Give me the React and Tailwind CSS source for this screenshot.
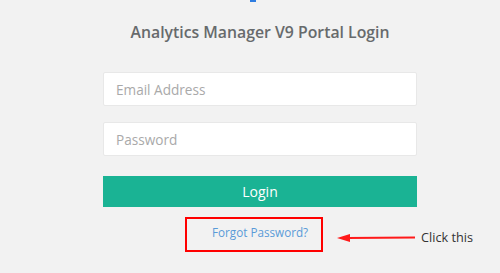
export default function App() {
  return (
    <div className="w-[500px] h-[273px] overflow-hidden bg-[#f2f2f2] relative" style={{ fontFamily: '"Open Sans", "Liberation Sans", sans-serif' }}>
      <div className="ml-[250px] w-[6px] h-[2px] bg-[#2f7de1]" />
      <div className="ml-[103px] w-[314px] flex flex-col">
        <h1 className="mt-[19px] text-center text-[15.8px] leading-[22px] font-semibold text-[#676a6c]">
          Analytics Manager V9 Portal Login
        </h1>
        <input
          className="mt-[29px] h-[34px] w-full bg-white border border-[#e8e8e8] rounded-[2px] px-[12px] text-[13.6px] text-[#555] placeholder:text-[#a9a9a9] outline-none"
          placeholder="Email Address"
        />
        <input
          className="mt-[16px] h-[34px] w-full bg-white border border-[#e8e8e8] rounded-[2px] px-[12px] text-[13.6px] text-[#555] placeholder:text-[#a9a9a9] outline-none"
          placeholder="Password"
          type="password"
        />
        <button className="mt-[20px] h-[31px] w-full bg-[#1ab394] text-white text-[14px] leading-[31px]">
          Login
        </button>
        <div className="mt-[10px] flex items-center whitespace-nowrap">
          <div className="ml-[82px] w-[138px] shrink-0 h-[35px] border-2 border-[#ff0000] flex items-center pl-[25px] pb-[4px]">
            <span className="text-[11.7px] text-[#5a9bd8]">Forgot Password?</span>
          </div>
          <svg width="79" height="10" viewBox="0 0 79 10" className="ml-[14px] mt-[6px] shrink-0">
            <line x1="10" y1="5" x2="78" y2="4.5" stroke="#ff1a1a" strokeWidth="2" />
            <polygon points="0,5 13,1 13,9" fill="#ff1a1a" />
          </svg>
          <span className="ml-[5px] mt-[6px] shrink-0 text-[12.7px] text-[#333]">Click this</span>
        </div>
      </div>
    </div>
  );
}
